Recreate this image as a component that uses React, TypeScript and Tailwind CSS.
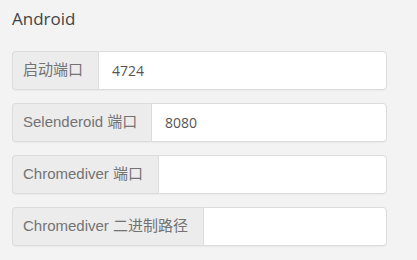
const fields = [
  { label: '启动端口', value: '4724', width: 'w-[86px]' },
  { label: 'Selenderoid 端口', value: '8080', width: 'w-[139px]' },
  { label: 'Chromediver 端口', value: '', width: 'w-[146px]' },
  { label: 'Chromediver 二进制路径', value: '', width: 'w-[191px]' },
];

export default function App() {
  return (
    <div className="h-[260px] w-[417px] bg-[#f3f3f3] px-3 pt-[7px] font-['Open_Sans','Noto_Sans_CJK_SC',sans-serif]">
      <h2 className="text-[17px] leading-[24px] text-[#444]">Android</h2>
      <div className="mt-[20px] flex w-[375px] flex-col gap-[13px]">
        {fields.map((f) => (
          <div key={f.label} className="flex h-[39px] rounded-[4px] shadow-[0_1px_1px_rgba(0,0,0,0.04)]">
            <span
              className={`${f.width} flex shrink-0 items-center whitespace-nowrap rounded-l-[4px] border border-r-0 border-[#dcdcdc] bg-[#ececec] pl-[10px] font-['Liberation_Sans','Noto_Sans_CJK_SC',sans-serif] text-[15px] text-[#737373]`}
            >
              {f.label}
            </span>
            <input
              defaultValue={f.value}
              className="min-w-0 flex-1 rounded-r-[4px] border border-[#dcdcdc] bg-white px-[13px] text-[14px] text-[#555] outline-none"
            />
          </div>
        ))}
      </div>
    </div>
  );
}
